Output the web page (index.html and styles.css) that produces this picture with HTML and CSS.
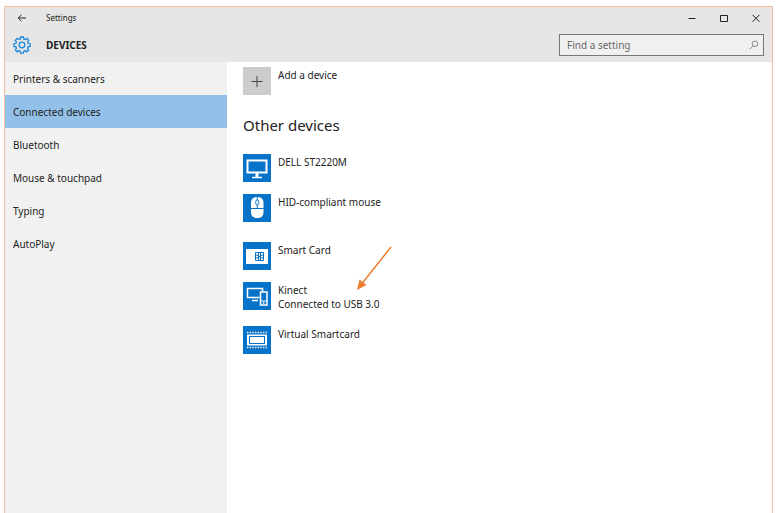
FILE: index.html
```
<!DOCTYPE html>
<html lang="en">
<head>
  <meta charset="UTF-8">
  <meta name="viewport" content="width=device-width, initial-scale=1.0">
  <title>Settings</title>
  <link rel="stylesheet" href="styles.css">
</head>
<body>
  <div class="window">
    <header>
      <div class="titlebar">
        <button class="back" aria-label="Back"><svg width="10" height="10" viewBox="0 0 10 10"><path d="M9 5H1.5M4.5 1.8L1.2 5l3.3 3.2"/></svg></button>
        <span class="title">Settings</span>
        <div class="window-buttons">
          <button aria-label="Minimize"><svg width="10" height="10" viewBox="0 0 10 10"><path d="M1.5 5.5h7"/></svg></button>
          <button aria-label="Maximize"><svg width="10" height="10" viewBox="0 0 10 10"><path d="M1.5 2.5h7v6h-7z"/></svg></button>
          <button aria-label="Close"><svg width="10" height="10" viewBox="0 0 10 10"><path d="M1.5 1.8l7 7M8.5 1.8l-7 7"/></svg></button>
        </div>
      </div>
      <div class="heading">
        <svg class="gear" width="18" height="18" viewBox="0 0 18 18">
          <path d="M7.6 1h2.8l.4 2.1 1.2.5 1.8-1.2 1.9 1.9-1.2 1.8.5 1.2 2.1.4v2.8l-2.1.4-.5 1.2 1.2 1.8-1.9 1.9-1.8-1.2-1.2.5-.4 2.1H7.6l-.4-2.1-1.2-.5-1.8 1.2-1.9-1.9 1.2-1.8-.5-1.2L.9 10.5V7.7L3 7.300l.5-1.2-1.2-1.8 1.9-1.9L6 3.600l1.200-.5z"/>
          <circle cx="9" cy="9" r="2.800"/>
        </svg>
        <h1>DEVICES</h1>
        <label class="search">
          <input type="text" placeholder="Find a setting" aria-label="Find a setting">
          <svg width="10" height="10" viewBox="0 0 10 10"><circle cx="6" cy="3.8" r="2.8"/><path d="M4 5.9L.8 9.2"/></svg>
        </label>
      </div>
    </header>

    <div class="columns">
      <nav>
        <a href="#printers">Printers &amp; scanners</a>
        <a href="#connected" class="active">Connected devices</a>
        <a href="#bluetooth">Bluetooth</a>
        <a href="#mouse">Mouse &amp; touchpad</a>
        <a href="#typing">Typing</a>
        <a href="#autoplay">AutoPlay</a>
      </nav>

      <main>
        <button class="device add">
          <svg class="tile" viewBox="0 0 28 28"><path d="M8.500 14.500h11M14 9v11"/></svg>
          <span>Add a device</span>
        </button>

        <h2>Other devices</h2>
        <ul>
          <li class="device">
            <svg class="tile" viewBox="0 0 28 28"><path d="M4.500 6.500h19v12h-19z" stroke-width="2"/><path d="M14 19v4" stroke-width="3"/><path d="M9 23.500h10" stroke-width="1.500"/></svg>
            <span>DELL ST2220M</span>
          </li>
          <li class="device">
            <svg class="tile" viewBox="0 0 28 28"><rect class="solid" x="8" y="3" width="12.500" height="21" rx="5.500"/><path class="cut" d="M8 14.500h12.500M14.250 3v3M14.250 11v3.500"/><rect class="cut" x="12.800" y="6" width="3" height="5" rx="1.500"/></svg>
            <span>HID-compliant mouse</span>
          </li>
          <li class="device spaced">
            <svg class="tile" viewBox="0 0 28 28"><rect class="solid" x="3" y="7" width="22" height="15"/><path class="cut" d="M12.500 10.500h8v8h-8zM12.500 13.200h3M12.500 15.800h3M17.500 13.200h3M17.500 15.800h3M15.500 10.500v8M17.500 10.500v8M15.500 14.500h2"/></svg>
            <span>Smart Card</span>
          </li>
          <li class="device">
            <svg class="tile" viewBox="0 0 28 28"><path d="M16.500 15.500H4.500v-9h15v3" stroke-width="1.500"/><path d="M9 18.500h6" stroke-width="1.500"/><rect x="17.500" y="10" width="6.500" height="13" stroke-width="1.500"/><path d="M17.500 19h6.500"/><circle cx="20.700" cy="21" r=".6"/></svg>
            <span>Kinect<br>Connected to USB 3.0</span>
            <svg class="pointer" width="38" height="48" viewBox="0 0 38 48"><path class="shaft" d="M36 2L7 38.500"/><path class="head" d="M2 45l2.500-10.500 7 5.500z"/></svg>
          </li>
          <li class="device last">
            <svg class="tile" viewBox="0 0 28 28"><path d="M4 6.500h20M4 21.500h20" stroke-width="1.600" stroke-dasharray="1.400 1.250"/><rect class="solid" x="4" y="8.500" width="20" height="11"/><rect class="cut" x="6.500" y="10.500" width="15" height="7"/></svg>
            <span>Virtual Smartcard</span>
          </li>
        </ul>
      </main>
    </div>
  </div>
</body>
</html>
```
FILE: styles.css
```
* { box-sizing: border-box; }
body { margin: 0; padding: 6px 5px 0 4px; background: #fff; color: #222; font-family: "Noto Sans", "Open Sans", sans-serif; font-size: 10px; line-height: 14px; }
button, input { font: inherit; color: inherit; }
button { padding: 0; border: 0; background: none; }
svg { fill: none; stroke: #222; flex: none; }
.window { display: flex; flex-direction: column; min-height: calc(100vh - 6px); border: 1px solid #f4bd9c; border-bottom: 0; }

header { background: #e6e6e6; }
.titlebar { display: flex; align-items: center; height: 21px; }
.back { display: flex; width: 41px; padding-left: 12px; }
.title { font-size: 8px; }
.window-buttons { display: flex; margin-left: auto; }
.window-buttons button { display: flex; align-items: center; justify-content: center; width: 32px; height: 21px; }
.heading { display: flex; align-items: center; height: 34px; padding: 0 8px; }
.gear { stroke: #1b87dc; stroke-width: 1.3; margin-right: 15px; }
h1 { margin: 0; font-size: 10px; font-weight: 700; }
.search { display: flex; align-items: center; width: 205px; height: 22px; margin-left: auto; padding: 0 4px 0 7px; border: 1px solid #777; background: #f0f0f0; }
.search input { flex: 1; min-width: 0; padding: 0; border: 0; outline: 0; background: none; }
.search input::placeholder { color: #686868; opacity: 1; }
.search svg { stroke: #888; }

.columns { display: flex; flex: 1; }
nav { width: 222px; background: #f1f1f1; }
nav a { display: flex; align-items: center; height: 33px; padding-left: 8px; color: inherit; text-decoration: none; }
nav a.active { background: #92c0e8; }

main { flex: 1; padding: 5px 16px; }
.device { display: flex; position: relative; gap: 7px; margin-bottom: 12px; text-align: left; }
.device.spaced { margin-top: 20px; }
.device.last { margin-top: 15px; }
.device span { padding-top: 1px; }
.tile { width: 28px; height: 28px; background: #0773c8; stroke: #fff; }
.tile .solid { fill: #fff; stroke: none; }
.tile .cut { stroke: #0773c8; }
.add { margin-bottom: 20px; }
.add .tile { background: #ccc; stroke: #444; }
h2 { margin: 0 0 19px; font-size: 15px; font-weight: 400; line-height: 20px; }
ul { margin: 0; padding: 0; list-style: none; }

/* arrow lying over the list, pointing at the Kinect entry */
.pointer { position: absolute; left: 112px; top: -37px; }
.pointer .shaft { stroke: #ed7d31; stroke-width: 1.5; }
.pointer .head { fill: #ed7d31; stroke: none; }
```
